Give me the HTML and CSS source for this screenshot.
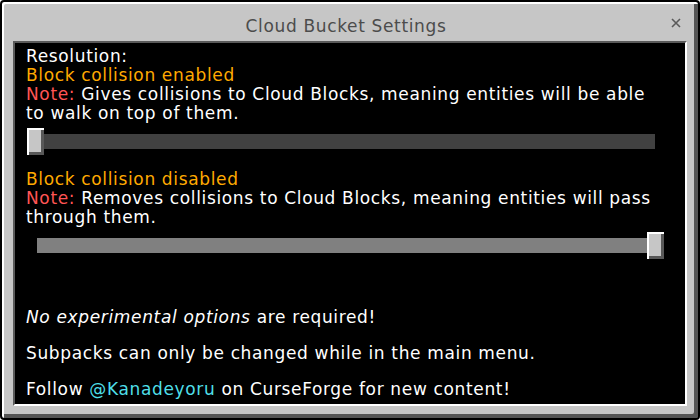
FILE: index.html
```html
<!DOCTYPE html>
<html>
<head>
<meta charset="utf-8">
<link rel="stylesheet" href="styles.css">
</head>
<body>
<div class="window">
  <div class="titlebar">
    <div class="title">Cloud Bucket Settings</div>
    <div class="close">
      <svg width="10" height="10" viewBox="0 0 10 10"><path d="M1 1 L9 9 M9 1 L1 9" stroke="#5a5a5a" stroke-width="1.6" fill="none"/></svg>
    </div>
  </div>
  <div class="content">
    <div class="lines">
      <div class="line">Resolution:</div>
      <div class="line gold">Block collision enabled</div>
      <div class="line"><span class="red">Note:</span> Gives collisions to Cloud Blocks, meaning entities will be able</div>
      <div class="line">to walk on top of them.</div>
    </div>
    <div class="slider">
      <div class="track"></div>
      <div class="thumb thumb-left"></div>
    </div>
    <div class="lines second">
      <div class="line gold">Block collision disabled</div>
      <div class="line"><span class="red">Note:</span> Removes collisions to Cloud Blocks, meaning entities will pass</div>
      <div class="line">through them.</div>
    </div>
    <div class="slider">
      <div class="track filled"></div>
      <div class="thumb thumb-right"></div>
    </div>
    <div class="footer">
      <div class="line"><span class="it">No experimental options</span> are required!</div>
      <div class="line">Subpacks can only be changed while in the main menu.</div>
      <div class="line">Follow <span class="aqua">@Kanadeyoru</span> on CurseForge for new content!</div>
    </div>
  </div>
</div>
</body>
</html>
```
FILE: styles.css
```css
html, body {
  margin: 0;
  padding: 0;
  background: #ffffff;
}
.window {
  width: 700px;
  height: 420px;
  box-sizing: border-box;
  border: 2px solid #000;
  border-radius: 4px;
  background: #c6c6c6;
  box-shadow: inset 2px 2px 0 #ffffff, inset -4px -4px 0 #555555;
  padding: 0 11px 12px 11px;
  display: flex;
  flex-direction: column;
  font-family: "DejaVu Sans", sans-serif;
  font-size: 17px;
  letter-spacing: 0.65px;
}
.titlebar {
  height: 39px;
  box-sizing: border-box;
  padding-top: 8px;
  display: flex;
  align-items: center;
}
.title {
  flex: 1;
  text-align: center;
  color: #4c4c4c;
  padding-left: 8px;
}
.close {
  width: 10px;
  height: 10px;
  margin-right: 6px;
  margin-top: -6px;
  display: flex;
}
.content {
  flex: 1;
  background: #000;
  border-style: solid;
  border-width: 2px;
  border-color: #5a5a5a #ffffff #ffffff #5a5a5a;
  padding: 4px 11px 5px 11px;
  display: flex;
  flex-direction: column;
  color: #ffffff;
}
.line {
  line-height: 19px;
  height: 19px;
  white-space: nowrap;
}
.gold { color: #ffaa00; }
.red { color: #ff5555; }
.aqua { color: #4fdfe8; }
.it { font-style: italic; }
.second { margin-top: 15px; }
.slider {
  position: relative;
  width: 637px;
  height: 27px;
  margin-top: 5px;
  margin-left: 1px;
}
.track {
  height: 15px;
  margin: 6px 9px 0 10px;
  background: #414141;
}
.track.filled { background: #808080; }
.thumb {
  position: absolute;
  top: 0;
  width: 17px;
  height: 27px;
  box-sizing: border-box;
  background: #c6c6c6;
  box-shadow: inset 2px 2px 0 #ffffff, inset -3px -3px 0 #585858;
}
.thumb-left { left: 0; }
.thumb-right { right: 0; }
.footer {
  margin-top: auto;
  display: flex;
  flex-direction: column;
  gap: 17px;
}
```
